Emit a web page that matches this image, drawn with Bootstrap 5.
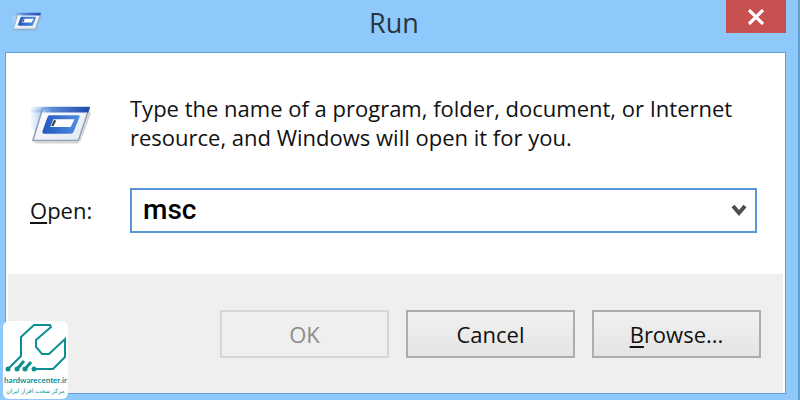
<!DOCTYPE html>
<html lang="en">
<head>
<meta charset="utf-8">
<meta name="viewport" content="width=device-width, initial-scale=1">
<title>Run</title>
<link href="https://cdn.jsdelivr.net/npm/bootstrap@5.3.0/dist/css/bootstrap.min.css" rel="stylesheet">
<style>
  body { font-family: "Open Sans", "Noto Sans", sans-serif; font-size: 22px; font-weight: 500; line-height: 29px; color: #111; background: #8fc8fb; }
  .run-window { padding: 0 12px 6px 5px; border-right: 2px solid #5f9fd0; }
  .title-bar { height: 52px; padding-left: 7px; }
  .title-icon { width: 30px; height: 20px; margin-top: 12px; }
  .title-text { font-size: 27px; line-height: 46px; color: #2b3540; padding-left: 20px; }
  .btn-shut { width: 60px; height: 33px; background: #c75050; border: 0; border-radius: 0; }
  .btn-shut:hover { background: #e04343; }
  .client { background: #fff; border: 1px solid #659fd6; }
  .prompt-area { padding: 41px 28px 41px 24px; }
  .side { width: 100px; flex: none; }
  .run-icon { width: 62px; height: 42px; margin-top: 11px; }
  .combo-row { margin-top: 36px; }
  .combo { height: 45px; border: 2px solid #5797d8; background: #fff; }
  .combo input { font: 500 28px/36px Roboto, "Open Sans", sans-serif; color: #000; border: 0; outline: 0; background: none; padding: 0 0 2px 11px; min-width: 0; }
  .combo button { width: 32px; border: 0; background: none; }
  .actions { background: #efefef; margin: 0 2px; padding: 36px 22px 35px; gap: 17px; }
  .btn-win { width: 169px; height: 48px; padding: 0; border: 2px solid #adadad; border-radius: 0; font-size: 22px; font-weight: 500; line-height: 29px; color: #111; background: linear-gradient(#f1f1f1, #e4e4e4); }
  .btn-win:disabled { color: #8b8b8b; border-color: #d6d6d6; background: #efefef; opacity: 1; }
  .key { text-decoration: underline; text-decoration-thickness: 2px; text-underline-offset: 3px; }
  .site-logo { left: 3px; bottom: 1px; width: 65px; height: 78px; background: #fff; border-radius: 6px; color: #0d8f92; text-decoration: none; padding-top: 2px; }
  .site-logo svg { width: 65px; height: 51px; }
  .site-name { font-family: Lato, "Open Sans", sans-serif; font-size: 8px; line-height: 12px; font-weight: 700; }
  .site-fa { font-family: "DejaVu Sans", sans-serif; font-size: 6px; line-height: 10px; }
</style>
<script src="https://cdn.jsdelivr.net/npm/bootstrap@5.3.0/dist/js/bootstrap.bundle.min.js"></script>
</head>
<body>
<svg width="0" height="0" class="position-absolute" aria-hidden="true">
  <defs>
    <linearGradient id="bar" x1="0" x2="1"><stop offset="0" stop-color="#7fb2ea" stop-opacity=".1"/><stop offset=".35" stop-color="#5b8bd8"/><stop offset="1" stop-color="#1c49ac"/></linearGradient>
    <linearGradient id="pane" x1="0" x2="1" y2="1"><stop offset="0" stop-color="#fff"/><stop offset="1" stop-color="#dfe7f3"/></linearGradient>
    <linearGradient id="frame" x1="0" x2="1"><stop offset="0" stop-color="#2358bf"/><stop offset="1" stop-color="#4e8ee2"/></linearGradient>
    <linearGradient id="trail" x1="0" x2="1"><stop offset="0" stop-color="#c5d9f2" stop-opacity=".2"/><stop offset="1" stop-color="#a8c8ee"/></linearGradient>
    <symbol id="run" viewBox="0 0 64 42">
      <path d="M4 37 H52 L63 8 L61 6 L50 39 H6z" fill="#888" opacity=".35"/>
      <path d="M1 4H14L5 27L1 22z" fill="url(#trail)"/>
      <path d="M13 3H61L50 36H3z" fill="url(#pane)" stroke="#93a0b2" stroke-width="1.6"/>
      <path d="M1 1H62L60 7H1z" fill="url(#bar)"/>
      <path d="M20 10H50Q52 10 51 12L45 27Q44 29 42 29H15Q12 29 13 26L18 12Q19 10 20 10z" fill="url(#frame)"/>
      <path d="M24 14H46L42 22H21z" fill="#fff"/>
      <path d="M26 15L23 21" stroke="#444" stroke-width="2.4"/>
    </symbol>
  </defs>
</svg>
<main class="run-window min-vh-100 d-flex flex-column position-relative">
  <header class="title-bar d-flex align-items-start justify-content-between">
    <svg class="title-icon" aria-hidden="true"><use href="#run"/></svg>
    <h1 class="title-text m-0 fw-normal flex-grow-1 text-center">Run</h1>
    <button type="button" class="btn btn-shut p-0 d-flex align-items-center justify-content-center" aria-label="Close">
      <svg width="18" height="16" viewBox="0 0 18 16" aria-hidden="true"><path d="M2 1L16 15M16 1L2 15" stroke="#fff" stroke-width="3.2"/></svg>
    </button>
  </header>
  <form class="client flex-grow-1 d-flex flex-column">
    <div class="prompt-area flex-grow-1">
      <div class="d-flex align-items-start">
        <div class="side"><svg class="run-icon d-block" aria-hidden="true"><use href="#run"/></svg></div>
        <p class="m-0">Type the name of a program, folder, document, or Internet<br>resource, and Windows will open it for you.</p>
      </div>
      <div class="combo-row d-flex align-items-center">
        <label class="side" for="open-name"><span class="key">O</span>pen:</label>
        <div class="combo d-flex flex-grow-1">
          <input id="open-name" class="flex-grow-1" type="text" value="msc" autocomplete="off">
          <button type="button" class="p-0 d-flex align-items-center justify-content-center" aria-label="Show recent commands">
            <svg width="16" height="13" viewBox="0 0 16 13" aria-hidden="true"><path d="M2 2L8 9L14 2" fill="none" stroke="#4d4d4d" stroke-width="4"/></svg>
          </button>
        </div>
      </div>
    </div>
    <div class="actions d-flex justify-content-end">
      <button type="submit" class="btn btn-win" disabled>OK</button>
      <button type="button" class="btn btn-win">Cancel</button>
      <button type="button" class="btn btn-win"><span class="key">B</span>rowse...</button>
    </div>
  </form>
  <a class="site-logo position-absolute d-flex flex-column align-items-center text-nowrap" href="#">
    <svg viewBox="0 0 65 51" fill="none" stroke="#0d8f92" stroke-width="2" aria-hidden="true">
      <path d="M5 46L18 33V14L31 2H47L48 4L33 17V24L39 31H46L62 16V34L50 46H31"/>
      <path d="M14 46L21 38M22 46L28 39" stroke-width="3"/>
      <g fill="#0d8f92" stroke="none"><circle cx="5" cy="46" r="2.5"/><circle cx="14" cy="46" r="2.5"/><circle cx="22" cy="46" r="2.5"/><circle cx="31" cy="46" r="2.5"/></g>
    </svg>
    <span class="site-name">hardwarecenter.ir</span>
    <span class="site-fa" lang="fa" dir="rtl">مرکز سخت افزار ایران</span>
  </a>
</main>
</body>
</html>
